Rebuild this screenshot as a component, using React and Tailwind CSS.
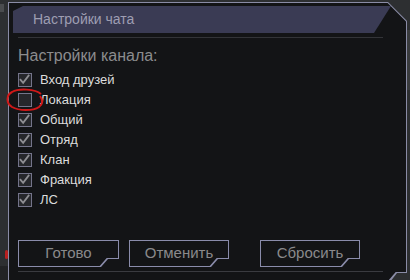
import React from "react";

const items = [
  { label: "Вход друзей", on: true },
  { label: "Локация", on: false },
  { label: "Общий", on: true },
  { label: "Отряд", on: true },
  { label: "Клан", on: true },
  { label: "Фракция", on: true },
  { label: "ЛС", on: true },
];

function Check({ on }) {
  return (
    <div className="w-[14px] h-[14px] border border-[#74748a] bg-[#26272b] shrink-0 relative">
      {on && (
        <svg viewBox="0 0 13 13" className="absolute left-0 top-0 w-[12px] h-[12px]">
          <path d="M1 5.5 L4.5 9.5 L11 1" fill="none" stroke="#8e8e92" strokeWidth="2" />
        </svg>
      )}
    </div>
  );
}

function Btn({ wide, children }) {
  return (
    <div
      className={
        wide
          ? "w-[101px] h-[27px] p-px bg-[#8a8cab] [clip-path:polygon(0_0,101px_0,101px_19px,90px_19px,83px_27px,0_27px)]"
          : "w-[100px] h-[27px] p-px bg-[#8a8cab] [clip-path:polygon(0_0,100px_0,100px_19px,89px_19px,82px_27px,0_27px)]"
      }
    >
      <div
        className={
          wide
            ? "w-full h-full bg-[#131416] flex items-center justify-center text-[15px] text-[#8a8a8c] [clip-path:polygon(0_0,99px_0,99px_17px,87.7px_17px,80.7px_25px,0_25px)]"
            : "w-full h-full bg-[#131416] flex items-center justify-center text-[15px] text-[#8a8a8c] [clip-path:polygon(0_0,98px_0,98px_17px,86.7px_17px,79.7px_25px,0_25px)]"
        }
      >
        {children}
      </div>
    </div>
  );
}

export default function App() {
  return (
    <div
      className="w-[410px] h-[280px] bg-[#2d2f31] relative overflow-hidden"
      style={{ fontFamily: '"Liberation Sans", Arial, sans-serif' }}
    >
      <div className="absolute left-0 top-[4px] w-[4px] h-[8px] bg-[#4a4c4e]" />
      <div className="absolute left-[406px] top-[30px] w-[4px] h-[60px] bg-[#3a3c3e]" />
      <div className="absolute left-[5px] top-[250px] w-[3px] h-[9px] bg-[#b82020] rounded-sm" />
      <div className="absolute left-0 top-[266px] w-[8px] h-[14px] bg-[#222325]" />

      <div className="ml-[8px] mt-[2px] w-[399px] h-[280px] p-px bg-[#8a8ca6] [clip-path:polygon(0_0,380px_0,399px_19px,399px_271px,389px_271px,382px_280px,0_280px)]">
        <div className="w-full h-full bg-[#131416] flex flex-col [clip-path:polygon(0_0,378.6px_0,397px_18.4px,397px_269px,386.7px_269px,379px_278px,0_278px)]">
          <div className="ml-[4px] mt-[3px] w-[378px] h-[27px] bg-[#3a3b54] flex items-center pl-[20px] text-[14px] text-[#9e9eb2] [clip-path:polygon(0_5px,10px_0,378px_0,361px_27px,0_27px)]">
            Настройки чата
          </div>
          <div className="ml-[9px] mt-[4px] w-[365px] h-px bg-[#333438]" />
          <div className="ml-[9px] mt-[8px] h-[20px] leading-[20px] text-[16px] text-[#8c8c8e]">
            Настройки канала:
          </div>
          <div className="ml-[9px] mt-[4px] flex flex-col">
            {items.map((it) => (
              <div key={it.label} className="h-[20px] flex items-center gap-[8px]">
                <Check on={it.on} />
                <span className="text-[13px] text-[#dcdcdc] leading-[20px]">{it.label}</span>
              </div>
            ))}
          </div>
          <div className="ml-[9px] mt-[30px] flex">
            <Btn wide>Готово</Btn>
            <div className="ml-[10px]">
              <Btn>Отменить</Btn>
            </div>
            <div className="ml-[31px]">
              <Btn>Сбросить</Btn>
            </div>
          </div>
          <div className="ml-[9px] mt-[4px] w-[365px] h-px bg-[#3a3b40]" />
        </div>
      </div>

      <svg className="absolute left-[5px] top-[87px] w-[40px] h-[26px]" viewBox="0 0 40 26">
        <path
          d="M36 7 C30 2 14 1 7 5 C1 8 1 16 7 20 C14 24 28 24 34 20 C38 17 38 13 35 9"
          fill="none"
          stroke="#d01818"
          strokeWidth="2"
        />
      </svg>
    </div>
  );
}
